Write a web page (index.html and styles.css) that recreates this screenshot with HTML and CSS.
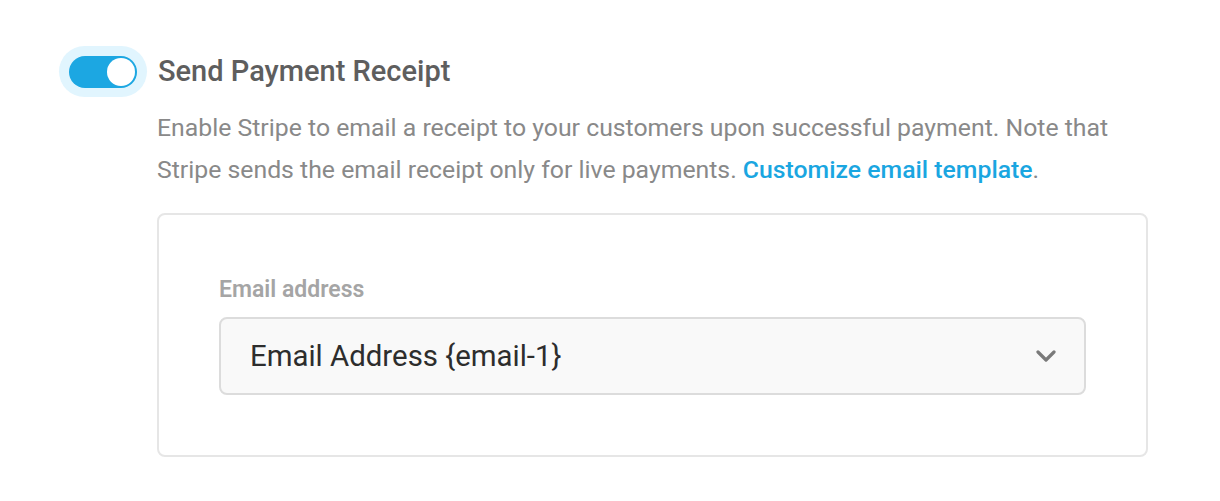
FILE: index.html
```html
<!DOCTYPE html>
<html lang="en">
<head>
<meta charset="utf-8">
<title>Send Payment Receipt</title>
<link rel="stylesheet" href="styles.css">
</head>
<body>
<div class="wrap">
  <div class="row">
    <div class="halo">
      <div class="track"><span class="knob"></span></div>
    </div>
    <h2 class="title">Send Payment Receipt</h2>
  </div>
  <div class="content">
    <p class="desc">Enable Stripe to email a receipt to your customers upon successful payment. Note that Stripe sends the email receipt only for live payments. <a class="link" href="#">Customize email template</a>.</p>
    <div class="card">
      <div class="label">Email address</div>
      <div class="select">
        <span class="value">Email Address {email-1}</span>
        <svg class="chev" width="20" height="12" viewBox="0 0 20 12"><path d="M2 2 L10 10 L18 2" fill="none" stroke="#7a7a7a" stroke-width="3.2" stroke-linecap="round" stroke-linejoin="round"/></svg>
      </div>
    </div>
  </div>
</div>
</body>
</html>
```
FILE: styles.css
```css
html, body {
  margin: 0;
  padding: 0;
  background: #ffffff;
}
body {
  font-family: Roboto, "Liberation Sans", sans-serif;
}
.wrap {
  padding: 46px 0 0 59px;
}
.row {
  display: flex;
  align-items: center;
  gap: 11px;
}
.halo {
  width: 88px;
  height: 51px;
  border-radius: 26px;
  background: #e1f5fe;
  display: flex;
  align-items: center;
  justify-content: center;
}
.track {
  width: 68px;
  height: 32px;
  border-radius: 16px;
  background: #1ca7e2;
  display: flex;
  align-items: center;
  justify-content: flex-end;
  padding-right: 2px;
  box-sizing: border-box;
}
.knob {
  width: 28px;
  height: 28px;
  border-radius: 50%;
  background: #ffffff;
}
.title {
  margin: 0;
  font-size: 29px;
  font-weight: 500;
  color: #5e5e5e;
  line-height: 51px;
}
.content {
  margin-left: 98px;
  width: 991px;
}
.desc {
  margin: 10px 0 0;
  font-size: 24.8px;
  line-height: 42px;
  color: #898989;
}
.link {
  color: #1aa6e1;
  text-decoration: none;
  font-weight: 500;
}
.card {
  margin-top: 22px;
  border: 2px solid #e6e6e6;
  border-radius: 8px;
  padding: 63px 60px 60px 60px;
}
.label {
  font-size: 23px;
  line-height: 24px;
  font-weight: 600;
  color: #a5a5a5;
  margin-bottom: 15px;
}
.select {
  height: 78px;
  box-sizing: border-box;
  border: 2px solid #dcdcdc;
  border-radius: 8px;
  background: #f9f9f9;
  display: flex;
  align-items: center;
  justify-content: space-between;
  padding: 0 28px 0 29px;
}
.value {
  font-size: 29.4px;
  color: #2d2d2d;
}
.chev {
  display: block;
}
```
